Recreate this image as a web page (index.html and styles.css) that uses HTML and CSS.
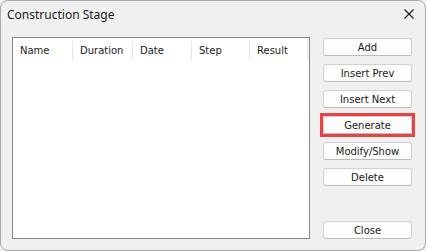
FILE: index.html
```html
<!DOCTYPE html>
<html lang="en">
<head>
    <meta charset="UTF-8">
    <meta name="viewport" content="width=device-width, initial-scale=1.0">
    <title>Construction Stage</title>
    <link rel="stylesheet" href="styles.css">
</head>
<body>
    <div class="dialog">
        <div class="titlebar">
            <span class="title">Construction Stage</span>
            <svg class="close-x" width="10" height="10" viewBox="0 0 10 10">
                <path d="M0.5 0.5 L9.5 9.5 M9.5 0.5 L0.5 9.5" stroke="#1a1a1a" stroke-width="1.1" fill="none"/>
            </svg>
        </div>
        <div class="content">
            <div class="list">
                <div class="list-head">
                    <div class="col c1">Name</div>
                    <div class="col c2">Duration</div>
                    <div class="col c3">Date</div>
                    <div class="col c4">Step</div>
                    <div class="col c5">Result</div>
                </div>
            </div>
            <div class="buttons">
                <button class="btn">Add</button>
                <button class="btn">Insert Prev</button>
                <button class="btn">Insert Next</button>
                <button class="btn marked">Generate</button>
                <button class="btn">Modify/Show</button>
                <button class="btn">Delete</button>
                <button class="btn close">Close</button>
            </div>
        </div>
    </div>
</body>
</html>
```

FILE: styles.css
```css
html, body {
    margin: 0;
    padding: 0;
    background: #f0f0f0;
}
body {
    font-family: Tahoma, "DejaVu Sans", "Noto Sans", sans-serif;
}
.dialog {
    width: 424px;
    height: 249px;
    border: 1px solid #a8a8a8;
    border-radius: 8px;
    background: #f0f0f0;
    display: flex;
    flex-direction: column;
    overflow: hidden;
}
.titlebar {
    height: 30px;
    display: flex;
    align-items: center;
    padding: 0 11px 0 6px;
}
.title {
    font-family: "Noto Sans", "Open Sans", sans-serif;
    font-size: 12px;
    color: #1a1a1a;
    flex: 1;
    margin-top: -3px;
}
.close-x {
    margin-top: -4px;
}
.content {
    flex: 1;
    display: flex;
    padding: 6px 12px 0 11px;
    gap: 13px;
}
.list {
    width: 296px;
    height: 200px;
    border: 1px solid #828790;
    background: #fff;
}
.list-head {
    display: flex;
    height: 19px;
    margin-top: 3px;
}
.col {
    border-right: 1px solid #e5e5e5;
    font-size: 10px;
    color: #1a1a1a;
    padding-left: 7px;
    box-sizing: border-box;
    line-height: 20px;
}
.c1 { width: 60px; }
.c2 { width: 60px; }
.c3 { width: 59px; }
.c4 { width: 58px; }
.c5 { width: 58px; }
.buttons {
    width: 89px;
    display: flex;
    flex-direction: column;
    gap: 8px;
    padding-top: 1px;
}
.btn {
    position: relative;
    height: 18px;
    margin: 0;
    padding: 0;
    border: 1px solid #d0d0d0;
    border-bottom-color: #bcbcbc;
    border-radius: 3px;
    background: #fdfdfd;
    font-family: Tahoma, "DejaVu Sans", "Noto Sans", sans-serif;
    font-size: 10px;
    color: #1a1a1a;
}
.marked::after {
    content: "";
    position: absolute;
    left: -4px;
    top: -4px;
    right: -4px;
    bottom: -4px;
    border: 3px solid #e84343;
}
.close {
    margin-top: auto;
    margin-bottom: 11px;
}
```
